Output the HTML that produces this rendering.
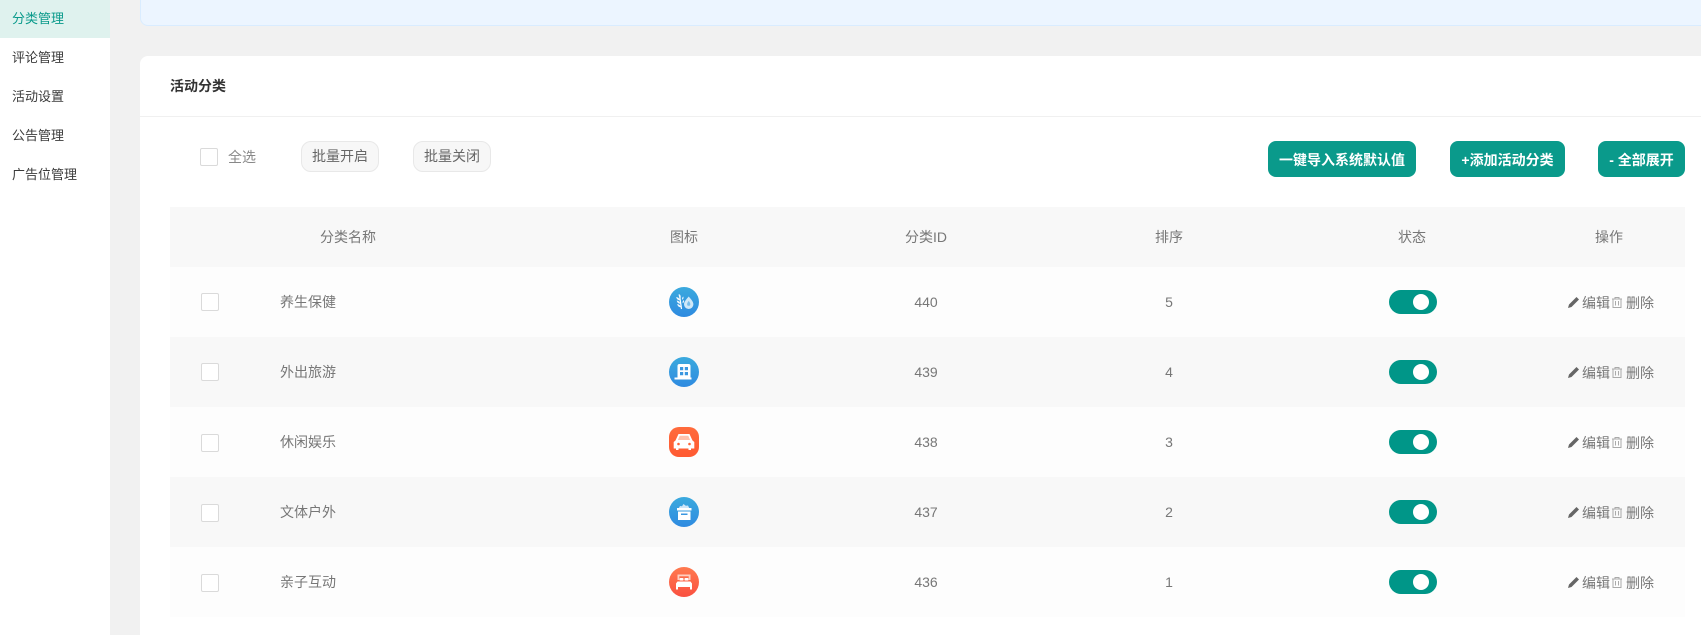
<!DOCTYPE html>
<html><head><meta charset="utf-8"><style>
html,body{margin:0;padding:0;width:1701px;height:635px;overflow:hidden;background:#f1f1f1;font-family:"Liberation Sans","Noto Sans CJK SC",sans-serif;font-size:14px;color:#606266}
div,span,svg{position:absolute;white-space:nowrap}
#w{left:0;top:0;width:1701px;height:635px;overflow:hidden}
.side{left:0;top:0;width:110px;height:635px;background:#fff}
.m{left:12px;font-size:13px;line-height:20px;color:#3a3a3a}
.blue{left:140px;top:-10px;width:1580px;height:34px;background:#ecf5ff;border:1px solid #d9ecff;border-radius:8px}
.card{left:140px;top:56px;width:1580px;height:579px;background:#fff;border-radius:8px 8px 0 0}
.hl{left:140px;top:116px;width:1561px;height:1px;background:#f0f0f0}
.cb{width:16px;height:16px;background:#fff;border:1px solid #dadada;border-radius:2px}
.gb{top:141px;height:29px;background:#f7f7f7;border:1px solid #e8e8e8;border-radius:10px;text-align:center;line-height:29px;color:#666;width:76px}
.b{top:141px;height:36px;line-height:38px;background:#0a9a8b;color:#fff;border-radius:8px;text-align:center;font-weight:bold;font-size:14px}
.r{left:170px;width:1515px}
.c{transform:translateX(-50%);line-height:20px;color:#777}
.t{left:1389px;width:48px;height:24px;border-radius:12px;background:#009688}
.t i{position:absolute;left:24px;top:4px;width:16px;height:16px;border-radius:50%;background:#fff}
.tx{line-height:20px;color:#777}
</style></head><body><div id="w">
<div class="side"></div>
<div style="left:0;top:0;width:110px;height:38px;background:#dff2ee"></div>
<div class="m" style="top:9px;color:#0a9a8b">分类管理</div>
<div class="m" style="top:48px">评论管理</div>
<div class="m" style="top:87px">活动设置</div>
<div class="m" style="top:126px">公告管理</div>
<div class="m" style="top:165px">广告位管理</div>
<div class="blue"></div>
<div class="card"></div>
<div class="hl"></div>
<div style="left:170px;top:76px;line-height:20px;font-weight:bold;font-size:14px;color:#333">活动分类</div>
<div class="cb" style="left:200px;top:148px"></div>
<div style="left:228px;top:147px;line-height:20px;font-size:14px;color:#888">全选</div>
<div class="gb" style="left:301px">批量开启</div>
<div class="gb" style="left:413px">批量关闭</div>
<div class="b" style="left:1268px;width:148px">一键导入系统默认值</div>
<div class="b" style="left:1450px;width:115px">+添加活动分类</div>
<div class="b" style="left:1598px;width:87px">- 全部展开</div>

<div class="r" style="top:207px;height:60px;background:#f8f8f8"></div>
<div class="c" style="left:348px;top:227px">分类名称</div>
<div class="c" style="left:684px;top:227px">图标</div>
<div class="c" style="left:926px;top:227px">分类ID</div>
<div class="c" style="left:1169px;top:227px">排序</div>
<div class="c" style="left:1412px;top:227px">状态</div>
<div class="c" style="left:1609px;top:227px">操作</div>

<div class="r" style="top:267px;height:70px;background:#fdfdfd"></div>
<div class="r" style="top:337px;height:70px;background:#f8f8f8"></div>
<div class="r" style="top:407px;height:70px;background:#fdfdfd"></div>
<div class="r" style="top:477px;height:70px;background:#f8f8f8"></div>
<div class="r" style="top:547px;height:70px;background:#fdfdfd"></div>

<svg width="0" height="0" style="left:0;top:0"><defs>
<linearGradient id="bl" x1="0" y1="0" x2="0" y2="1"><stop offset="0" stop-color="#3baade"/><stop offset="1" stop-color="#2e8ae0"/></linearGradient>
<linearGradient id="or" x1="0" y1="0" x2="0" y2="1"><stop offset="0" stop-color="#ff6b3c"/><stop offset="1" stop-color="#ff5a32"/></linearGradient>
<linearGradient id="rd" x1="0" y1="0" x2="0" y2="1"><stop offset="0" stop-color="#ff7a50"/><stop offset="1" stop-color="#fa5040"/></linearGradient>
<g id="pen"><path d="M0 12 L1 8.5 L8.5 1 L11 3.5 L3.5 11 Z" fill="#666"/></g>
<g id="tr"><path d="M1 3H11M4 3V1.5H8V3M2 3V11.5H10V3M4.500 5V9.500M7.500 5V9.500" fill="none" stroke="#aaa" stroke-width="1"/></g>
</defs></svg>

<!-- row 1 -->
<div class="cb" style="left:201px;top:293px"></div>
<div class="tx" style="left:280px;top:292px">养生保健</div>
<svg style="left:669px;top:287px" width="30" height="30" viewBox="0 0 30 30"><circle cx="15" cy="15" r="15" fill="url(#bl)"/><path d="M10.500 8L12.500 22" stroke="#fff" stroke-width="1.200"/><path d="M9.800 7c1.800 1 2.200 2.300 1.800 4-1.600-.8-2.200-2.300-1.800-4zM7.200 10c2 .2 3.200 1.300 3.800 3.300-2.200-.1-3.500-1.400-3.800-3.300zM7.700 13.500c2 .2 3.200 1.300 3.800 3.300-2.200-.1-3.500-1.400-3.800-3.300zM8.200 17c2 .2 3.200 1.300 3.800 3.300-2.200-.1-3.500-1.400-3.800-3.300zM14.200 9.500c-1 .9-1.300 2-1 3.300 1.300-.7 1.700-2 1-3.300zM14.700 13c-1 .9-1.300 2-1 3.300 1.300-.7 1.700-2 1-3.300z" fill="#f2f9fe"/><path d="M19.700 9.500c2.600 3 4.700 5.300 4.700 7.800a4.700 4.700 0 0 1-9.400 0c0-2.500 2.100-4.800 4.700-7.800z" fill="#cfe8f8"/><path d="M19.700 14c.9 1.100 1.600 2.100 1.600 3.200a1.600 1.600 0 0 1-3.200 0c0-1.100.7-2.100 1.600-3.200z" fill="#78bdea"/></svg>
<div class="c" style="left:926px;top:292px">440</div>
<div class="c" style="left:1169px;top:292px">5</div>
<div class="t" style="top:290px"><i></i></div>
<svg style="left:1568px;top:296px" width="12" height="12"><use href="#pen"/></svg>
<div class="tx" style="left:1582px;top:293px">编辑</div>
<svg style="left:1611px;top:296px" width="12" height="12"><use href="#tr"/></svg>
<div class="tx" style="left:1626px;top:293px">删除</div>

<!-- row 2 -->
<div class="cb" style="left:201px;top:363px"></div>
<div class="tx" style="left:280px;top:362px">外出旅游</div>
<svg style="left:669px;top:357px" width="30" height="30" viewBox="0 0 30 30"><circle cx="15" cy="15" r="15" fill="url(#bl)"/><path d="M8.500 9a2 2 0 0 1 2-2h9a2 2 0 0 1 2 2v11.500h1V22.500h-17V20.500h3z" fill="#fff"/><path d="M11 10h3.200v3.200H11zM15.800 10H19v3.200h-3.200zM11 15h3.200v3.200H11zM15.800 15H19v3.200h-3.200z" fill="#3a97e0"/></svg>
<div class="c" style="left:926px;top:362px">439</div>
<div class="c" style="left:1169px;top:362px">4</div>
<div class="t" style="top:360px"><i></i></div>
<svg style="left:1568px;top:366px" width="12" height="12"><use href="#pen"/></svg>
<div class="tx" style="left:1582px;top:363px">编辑</div>
<svg style="left:1611px;top:366px" width="12" height="12"><use href="#tr"/></svg>
<div class="tx" style="left:1626px;top:363px">删除</div>

<!-- row 3 -->
<div class="cb" style="left:201px;top:434px"></div>
<div class="tx" style="left:280px;top:432px">休闲娱乐</div>
<svg style="left:669px;top:427px" width="30" height="30" viewBox="0 0 30 30"><rect width="30" height="30" rx="10" fill="url(#or)"/><path d="M9.500 7h11l3 6.500 1.800 1.500v6.500h-3.300v1.500h-2.500v-1.500h-10v1.500H7v-1.500H4.700V15l1.800-1.500z" fill="#fff"/><path d="M10.700 8.700h8.600l1.800 4.300H8.900z" fill="#ffc2ad"/><circle cx="9.500" cy="17" r="1.300" fill="#ff6438"/><circle cx="20.500" cy="17" r="1.300" fill="#ff6438"/></svg>
<div class="c" style="left:926px;top:432px">438</div>
<div class="c" style="left:1169px;top:432px">3</div>
<div class="t" style="top:430px"><i></i></div>
<svg style="left:1568px;top:436px" width="12" height="12"><use href="#pen"/></svg>
<div class="tx" style="left:1582px;top:433px">编辑</div>
<svg style="left:1611px;top:436px" width="12" height="12"><use href="#tr"/></svg>
<div class="tx" style="left:1626px;top:433px">删除</div>

<!-- row 4 -->
<div class="cb" style="left:201px;top:504px"></div>
<div class="tx" style="left:280px;top:502px">文体户外</div>
<svg style="left:669px;top:497px" width="30" height="30" viewBox="0 0 30 30"><circle cx="15" cy="15" r="15" fill="url(#bl)"/><path d="M9.500 11.500l1.500-2.500 2 .3 1.500-2.300 2.300 1.800 2.200-.3 1.500 3z" fill="#cfe6f8"/><rect x="8" y="11" width="14.500" height="2.500" fill="#fff"/><path d="M9 14.500h12.500V23H9z" fill="#fff"/><rect x="12" y="16.500" width="6.500" height="1.500" fill="#3a97e0"/></svg>
<div class="c" style="left:926px;top:502px">437</div>
<div class="c" style="left:1169px;top:502px">2</div>
<div class="t" style="top:500px"><i></i></div>
<svg style="left:1568px;top:506px" width="12" height="12"><use href="#pen"/></svg>
<div class="tx" style="left:1582px;top:503px">编辑</div>
<svg style="left:1611px;top:506px" width="12" height="12"><use href="#tr"/></svg>
<div class="tx" style="left:1626px;top:503px">删除</div>

<!-- row 5 -->
<div class="cb" style="left:201px;top:574px"></div>
<div class="tx" style="left:280px;top:572px">亲子互动</div>
<svg style="left:669px;top:567px" width="30" height="30" viewBox="0 0 30 30"><circle cx="15" cy="15" r="15" fill="url(#rd)"/><path d="M8.500 7.500h13V13h-1.800V9.300H10.300V13H8.500z" fill="#ffcfc0"/><rect x="10.500" y="11" width="4" height="2.500" rx=".8" fill="#fff"/><rect x="15.500" y="11" width="4" height="2.500" rx=".8" fill="#fff"/><path d="M8.500 14.500h13l1.500 2V20H7v-3.500z" fill="#fff"/><path d="M7 20h2v2.500H7zM21 20h2v2.500h-2z" fill="#fff"/></svg>
<div class="c" style="left:926px;top:572px">436</div>
<div class="c" style="left:1169px;top:572px">1</div>
<div class="t" style="top:570px"><i></i></div>
<svg style="left:1568px;top:576px" width="12" height="12"><use href="#pen"/></svg>
<div class="tx" style="left:1582px;top:573px">编辑</div>
<svg style="left:1611px;top:576px" width="12" height="12"><use href="#tr"/></svg>
<div class="tx" style="left:1626px;top:573px">删除</div>
</div></body></html>
